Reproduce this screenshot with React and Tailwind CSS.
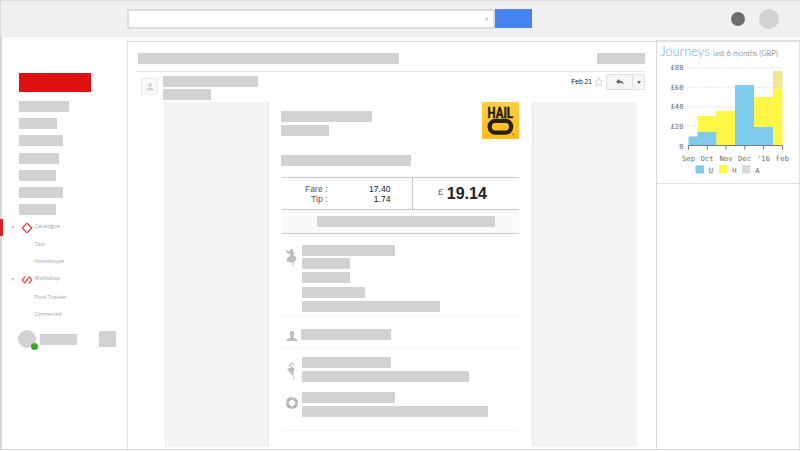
import React from 'react';

const Bar = ({ className = '' }) => <div className={`h-[11px] shrink-0 bg-[#d2d2d2] ${className}`} />;

const Caret = ({ className = '' }) => (
  <svg viewBox="0 0 4 3" className={`h-[3px] w-1 shrink-0 ${className}`} fill="currentColor">
    <path d="M0 0h4L2 3z" />
  </svg>
);

function TopBar() {
  return (
    <header className="flex h-[37px] shrink-0 items-start border-l border-t border-[#dcdcdc] bg-[#f0f0f0] pl-[126px]">
      <div className="mt-2 flex h-[20px] w-[368px] items-center justify-end border-2 border-[#dddddd] bg-white pr-1">
        <Caret className="text-[#c4c4c4]" />
      </div>
      <div className="mt-2 h-[19px] w-[37px] bg-[#4683f0]" />
      <div className="ml-[199px] mt-[11px] size-[14px] rounded-full bg-[#6d6d6d]" />
      <div className="ml-[14px] mt-2 size-5 rounded-full bg-[#d2d2d2]" />
    </header>
  );
}

const Leaf = ({ children, className = '' }) => (
  <div className={`pl-[32.5px] text-[5.4px] leading-[8px] text-[#a2a2a2] ${className}`}>{children}</div>
);

function Sidebar() {
  return (
    <aside className="relative flex w-[125px] shrink-0 flex-col font-['Open_Sans',sans-serif]">
      <div className="absolute -left-0.5 top-[182px] h-[17px] w-[3px] bg-[#dc2027]" />
      <div className="ml-[17px] mt-9 h-[19px] w-[72px] shrink-0 bg-[#df1010]" />
      <div className="ml-[17px] mt-[9px] flex flex-col gap-[6.2px]">
        <Bar className="w-[50px]" />
        <Bar className="w-[38px]" />
        <Bar className="w-[44px]" />
        <Bar className="w-[40px]" />
        <Bar className="w-[37px]" />
        <Bar className="w-[43.5px]" />
        <Bar className="w-[37px]" />
      </div>
      <div className="mt-[6.6px] flex h-3 items-center pl-[9px] text-[5.4px] leading-[8px] tracking-[0.03px] text-[#a2a2a2]">
        <Caret className="text-[#c8c8c8]" />
        <svg viewBox="0 0 12 12" className="ml-1.5 size-3 shrink-0" fill="none" stroke="#df2a2a" strokeWidth="1.1">
          <path d="M6 1.2 10.8 6 6 10.8 1.2 6z" />
        </svg>
        <span className="ml-[1.5px] -mt-[3px]">Catalogue</span>
      </div>
      <Leaf className="mt-[6px]">Taxi</Leaf>
      <Leaf className="mt-[9px] tracking-[0.05px]">Homebuyer</Leaf>
      <div className="mt-[9px] flex h-3 items-center pl-[9px] text-[5.4px] leading-[8px] text-[#a2a2a2]">
        <Caret className="text-[#c8c8c8]" />
        <svg viewBox="0 0 12 12" className="ml-1.5 size-3 shrink-0" fill="none" stroke="#df2a2a" strokeWidth="1.1">
          <path d="M4.200 2.600 1.200 6l3 3.400M7.800 2.600 10.800 6l-3 3.400M7.600 3.600 4.400 8.400" />
        </svg>
        <span className="ml-[1.5px] -mt-[3px]">Workshop</span>
      </div>
      <Leaf className="mt-[7.5px]">Pixel Tracker</Leaf>
      <Leaf className="mt-[9px]">Connected</Leaf>
      <div className="mt-[11.5px] flex items-start">
        <div className="relative ml-4 size-[18px] rounded-full bg-[#d2d2d2]">
          <div className="absolute left-[13px] top-[13px] size-[7px] rounded-full bg-[#38a81c]" />
        </div>
        <Bar className="ml-1 mt-[4px] w-[37px]" />
        <div className="ml-[22px] mt-px h-4 w-[17px] bg-[#d2d2d2]" />
      </div>
    </aside>
  );
}

function HailoLogo() {
  return (
    <svg viewBox="0 0 37 37" className="size-[37px] shrink-0">
      <defs>
        <linearGradient id="gold" x1="0" y1="0" x2="0" y2="1">
          <stop offset="0" stopColor="#ffcf45" />
          <stop offset="1" stopColor="#ffbb1e" />
        </linearGradient>
      </defs>
      <rect width="37" height="37" fill="url(#gold)" />
      <text x="5.5" y="15.6" textLength="25.5" lengthAdjust="spacingAndGlyphs" fontFamily="Roboto, sans-serif" fontWeight="800" fontSize="14.6" fill="#241c08" stroke="#241c08" strokeWidth=".3">HAIL</text>
      <rect x="7.7" y="18.800" width="21.4" height="11.800" rx="5.6" fill="none" stroke="#2a200a" strokeWidth="4.300" />
      <path d="M30 31.800h2.400v.8H30z" fill="#7d5c14" />
    </svg>
  );
}

const Dotted = () => <div className="h-px shrink-0 bg-[repeating-linear-gradient(90deg,#b4b4b4_0_1px,#dcdcdc_1px_2px)]" />;
const Rule = ({ className = '' }) => <div className={`ml-[13px] h-px w-[237px] shrink-0 bg-[#f4f4f4] ${className}`} />;

function Receipt() {
  return (
    <article className="flex w-[263px] shrink-0 flex-col bg-white font-['Liberation_Sans',Arial,sans-serif]">
      <div className="flex h-[75px] shrink-0 items-start">
        <div className="ml-[12px] mt-[9px] flex w-[201px] flex-col">
          <Bar className="w-[91px]" />
          <Bar className="mt-[3px] w-[48px]" />
          <Bar className="mt-[19px] w-[130px]" />
        </div>
        <HailoLogo />
      </div>
      <div className="ml-[13px] flex w-[237px] shrink-0 flex-col">
        <Dotted />
        <div className="flex h-[31px]">
          <div className="grid w-[130px] grid-cols-2 pt-[7px] text-right text-[8.6px] leading-[9.5px]">
            <div className="pr-[19.5px] text-[#555]">Fare :<br />Tip :</div>
            <div className="pr-[21.5px] text-[#222]">17.40<br />1.74</div>
          </div>
          <div className="w-px bg-[repeating-linear-gradient(180deg,#b4b4b4_0_1px,#e4e4e4_1px_2px)]" />
          <div className="flex items-start pl-[25px] text-[#222]">
            <span className="mt-[8px] text-[9.5px] leading-[12px] text-[#666]">£</span>
            <span className="ml-[3.5px] mt-[7px] text-[16px] font-bold leading-[18px]">19.14</span>
          </div>
        </div>
        <Dotted />
        <div className="h-[23px] bg-[#fafafa] pl-[35px] pt-[6px]">
          <Bar className="w-[178px]" />
        </div>
        <Dotted />
      </div>
      <section className="mt-[11px] flex shrink-0">
        <svg viewBox="0 0 14 22" className="ml-[15px] mt-[2px] h-[22px] w-[14px] shrink-0" fill="#bdbdbd">
          <path d="M1.800 2.800 4.600 4.200 6 4.500 5.600 3l1.600-1 1.900.6.2 2 1 1.600-.8 2.300 2.200 1.300.8 3.200-1.500 1-1.400 1.200-.4 4.200h-.9l.1-4.800-1.300 1.300-2.800-1.200-1.900-.8.800-2.800 2.200-1.700 1-2.200L4 6.500 1.700 4.200z" />
        </svg>
        <div className="ml-[4px] flex flex-col">
          <Bar className="w-[93px]" />
          <Bar className="mt-0.5 w-[48px]" />
          <Bar className="mt-[3px] w-[48px]" />
          <Bar className="mt-1 w-[63px]" />
          <Bar className="mt-[3px] w-[138px]" />
        </div>
      </section>
      <Rule className="mt-[4px]" />
      <section className="mt-3 flex h-[11px] shrink-0">
        <svg viewBox="0 0 12 12" className="ml-[17px] mt-[1px] size-3 shrink-0" fill="#bdbdbd">
          <path d="M6 1C3.500 1 3.500 3.800 4.100 5.200c.5 1.200.7 1.700.4 2.300C4.100 8.300.4 8.600.3 11h11.400c-.1-2.400-3.800-2.700-4.200-3.500-.3-.6-.1-1.100.4-2.300C8.500 3.800 8.500 1 6 1z" />
        </svg>
        <Bar className="ml-[3px] w-[90px]" />
      </section>
      <Rule className="mt-[7px]" />
      <section className="mt-[9px] flex h-[25px] shrink-0">
        <svg viewBox="0 0 12 18" className="ml-4 mt-[5px] h-[18px] w-3 shrink-0" fill="#b8b8b8">
          <path d="M5 4.500V2.800Q5 1.200 6.700 1.200T8.300 3.200M5 4.500h1.800L7 7" fill="none" stroke="#b8b8b8" strokeWidth="1.100" />
          <path d="M2 6.800 9.300 5.600 8.200 14z" />
          <path d="m8.300 14.500.5 2.500" stroke="#b8b8b8" />
        </svg>
        <div className="ml-[5px] flex flex-col">
          <Bar className="w-[89px]" />
          <Bar className="mt-[3px] w-[167px]" />
        </div>
      </section>
      <section className="mt-[10px] flex shrink-0">
        <svg viewBox="0 0 14 14" className="ml-[16px] mt-[4px] size-[14px] shrink-0" fill="none">
          <circle cx="7" cy="7" r="4.6" stroke="#c6c6c6" strokeWidth="3" />
          <circle cx="7" cy="7" r="4.6" stroke="#b0b0b0" strokeWidth="3" strokeDasharray="3.613 3.613" strokeDashoffset="-1.8" />
        </svg>
        <div className="ml-[3px] flex flex-col">
          <Bar className="w-[93px]" />
          <Bar className="mt-[3px] w-[186px]" />
        </div>
      </section>
      <Rule className="mt-[13px]" />
    </article>
  );
}

function MailPane() {
  return (
    <main className="mt-1 flex w-[529px] shrink-0 flex-col border-l border-t border-[#e0e0e0] bg-white">
      <div className="mt-[11px] flex shrink-0 justify-between pl-[10px] pr-[11px]">
        <Bar className="w-[261px]" />
        <Bar className="w-[48px]" />
      </div>
      <div className="ml-2 mt-[7px] h-px w-[509px] shrink-0 bg-[#e8e8e8]" />
      <div className="flex h-[30px] shrink-0 items-start">
        <div className="ml-[13px] mt-[6px] flex size-[17px] items-center justify-center border border-[#ececec] bg-[#f8f8f8]">
          <svg viewBox="0 0 8 8" className="size-2" fill="#cfcfcf">
            <circle cx="4" cy="2" r="1.8" />
            <path d="M.5 7.5Q.5 4.5 4 4.5t3.5 3z" />
          </svg>
        </div>
        <div className="ml-[5px] mt-1 flex flex-col gap-0.5">
          <Bar className="w-[95px]" />
          <Bar className="w-[48px]" />
        </div>
        <div className="ml-auto mr-[11px] mt-[2px] flex items-center">
          <span className="font-['Liberation_Sans',Arial,sans-serif] text-[6.7px] leading-[10px] text-[#111]">Feb 21</span>
          <svg viewBox="0 0 10 10" className="ml-[2px] size-[10px]" fill="none" stroke="#cfcfcf" strokeWidth=".8">
            <path d="m5 .9 1.2 2.8 3 .2-2.3 2 .7 3L5 7.3 2.4 8.9l.7-3-2.3-2 3-.2z" />
          </svg>
          <div className="ml-[2px] flex h-4 w-[39px] rounded-[1px] border border-[#e0e0e0] bg-[#f6f6f6]">
            <div className="flex w-[26px] items-center justify-center border-r border-[#e0e0e0]">
              <svg viewBox="0 0 8 6" className="h-1.5 w-2" fill="#5c5c5c">
                <path d="M3 0v1.500c3 0 4.400 1.600 4.600 4.300C6.600 4.200 5.100 3.700 3 3.800v1.500L.3 2.600z" />
              </svg>
            </div>
            <div className="flex flex-1 items-center justify-center">
              <Caret className="text-[#606060]" />
            </div>
          </div>
        </div>
      </div>
      <div className="ml-[36px] flex h-[345px] w-[473px] shrink-0">
        <div className="w-[105px] shrink-0 border-r border-[#e4e4e4] bg-[#f4f4f4]" />
        <Receipt />
        <div className="w-[105px] shrink-0 border-l border-[#e6e6e6] bg-[#f4f4f4]" />
      </div>
    </main>
  );
}

const GRID = [['£80', 24.7], ['£60', 44.2], ['£40', 63.7], ['£20', 83.2]];
const MONTHS = [['Sep', 31.5], ['Oct', 50], ['Nov', 69], ['Dec', 87.5], ["'16", 106.5], ['Feb', 125.5]];
const LEGEND = [['U', 38.5, '#7ecbed'], ['H', 62, '#fff748'], ['A', 85, '#d9d9d9']];

function JourneysPanel() {
  return (
    <section className="mt-[3px] flex flex-1 flex-col border-l border-r border-l-[#d9d9d9] border-r-[#e2e2e2]">
      <div className="h-[144px] shrink-0 border-b border-t-2 border-[#e0e0e0] bg-white">
        <svg viewBox="0 -1 142 141" className="block h-[141px] w-[142px]">
          <text x="3.2" y="13.300" textLength="49.500" lengthAdjust="spacingAndGlyphs" fontFamily="Lato, sans-serif" fontWeight="300" fontSize="12.800" fill="#6faee0">Journeys</text>
          <text x="56.300" y="13.300" textLength="64.500" lengthAdjust="spacingAndGlyphs" fontFamily="Lato, sans-serif" fontSize="7.600" fontWeight="300" fill="#444">last 6 months (GBP)</text>
          <g fontFamily="'DejaVu Sans Mono', monospace" fontSize="7.2" fill="#6c6c74">
            {GRID.map(([label, y]) => (
              <g key={label}>
                <text x="26.500" y={y + 2.7} textAnchor="end">{label}</text>
                <path d={`M31.500 ${y}H125.500`} stroke="#d5d5d5" strokeWidth=".8" strokeDasharray="1.500 1.500" />
              </g>
            ))}
            <text x="26.500" y="105.600" textAnchor="end">0</text>
            {MONTHS.map(([label, x]) => (
              <text key={label} x={x} y="118" textAnchor="middle">{label}</text>
            ))}
            {LEGEND.map(([label, x, color]) => (
              <g key={label}>
                <rect x={x} y="122.300" width="8.500" height="8.200" rx=".7" fill={color} />
                <text x={x + 15.5} y="129.700" textAnchor="middle">{label}</text>
              </g>
            ))}
          </g>
          <path d="M40.500 102.500V73H59.300V68H78v34.500zM97 102.500V54h19v-8.500h9.500v57z" fill="#fff748" />
          <path d="M31.500 102.500V93.500h9V89h18.800v13.500zM78 102.500V42h19v42h19v18.500z" fill="#7ecbed" />
          <defs>
            <pattern id="hatch" width="3" height="3" patternUnits="userSpaceOnUse" patternTransform="rotate(-45)">
              <rect width="3" height="3" fill="#f3ecc0" />
              <path d="M.75 0v3" stroke="#f2e158" strokeWidth="1.400" />
            </pattern>
          </defs>
          <rect x="116" y="28" width="9.500" height="17.500" fill="url(#hatch)" />
          <path d="M31.500 106.500v-4h94v4M50.300 102.500v4M69 102.500v4M87.800 102.500v4M106.600 102.500v4" fill="none" stroke="#77777c" strokeWidth="1" />
        </svg>
      </div>
    </section>
  );
}

export default function App() {
  return (
    <div className="flex h-[451px] w-[800px] flex-col overflow-hidden bg-[#fafafa]">
      <TopBar />
      <div className="flex h-[413px] shrink-0 border-b border-l-2 border-b-[#dcdcdc] border-l-[#d9d9d9] bg-white">
        <Sidebar />
        <MailPane />
        <JourneysPanel />
      </div>
    </div>
  );
}
